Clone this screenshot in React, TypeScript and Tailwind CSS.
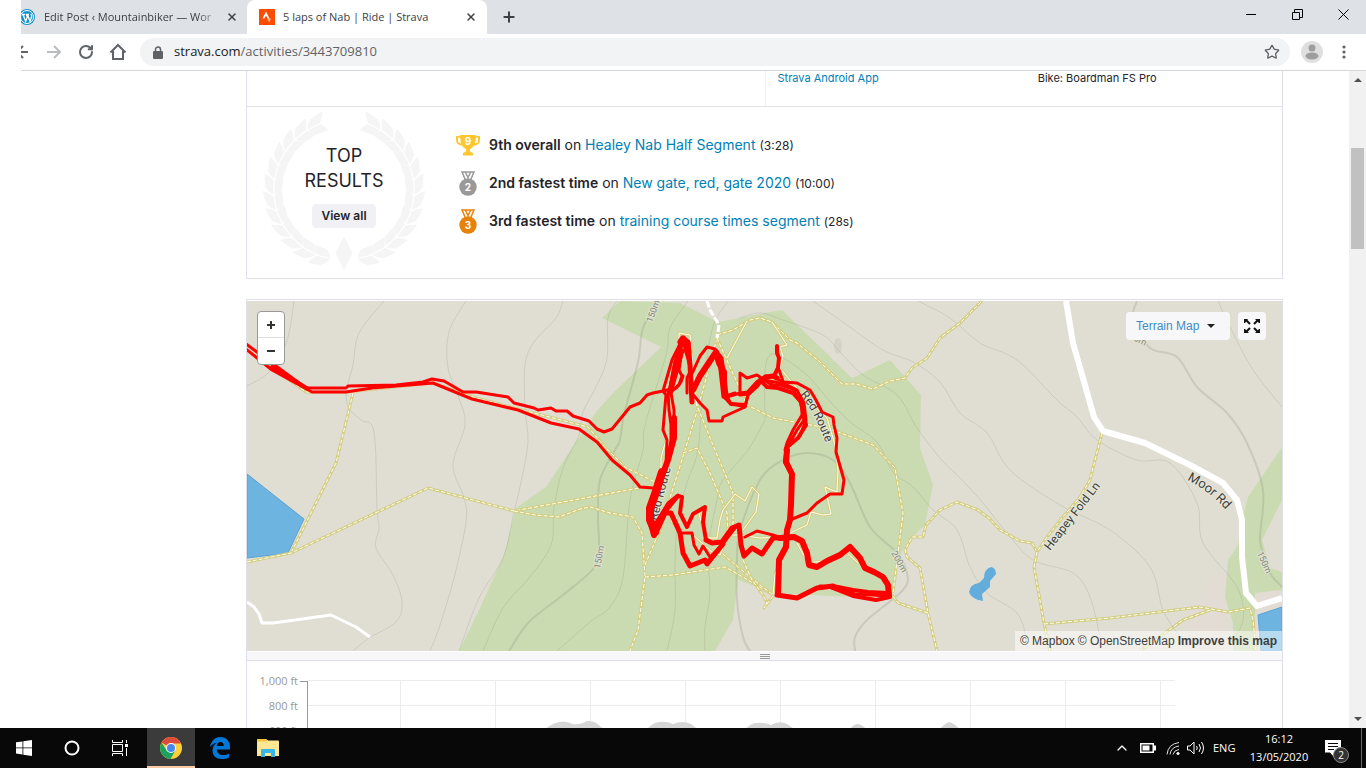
import { ReactNode } from "react";
import { ChevronUp, Plus, RotateCw, Star, X } from "lucide-react";

type Point = [number, number];

const parse = (points: string): Point[] =>
  points.split(" ").map((p) => p.split(",").map(Number) as Point);

// Catmull-Rom through the points, so contours come out as soft curves
const smooth = (points: string) => {
  const p = parse(points);
  let d = `M${p[0][0]} ${p[0][1]}`;
  for (let i = 0; i < p.length - 1; i++) {
    const a = p[i - 1] ?? p[i];
    const b = p[i];
    const c = p[i + 1];
    const e = p[i + 2] ?? c;
    d += `C${b[0] + (c[0] - a[0]) / 6} ${b[1] + (c[1] - a[1]) / 6} ${c[0] - (e[0] - b[0]) / 6} ${c[1] - (e[1] - b[1]) / 6} ${c[0]} ${c[1]}`;
  }
  return d;
};

const contours = [
  "294,301 290,328 284,348 268,373 247,386",
  "384,301 359,333 353,365 347,388 348,407 361,420 374,432 377,508 379,528 376,548 393,575 402,602 396,622 369,638 353,651",
  "466,301 449,332 448,368 459,398 465,425 453,465 464,498 466,522 454,578 439,628 430,651",
  "563,301 556,318 534,342 525,365 525,408 528,442 521,482 514,512 503,558 479,598 459,651",
  "617,301 608,318 607,358 597,385 583,412 579,435 563,468 554,508 551,545 529,578 503,608 483,651",
  "688,301 670,328 666,355 645,425 643,450 630,500 623,577 610,607 590,622 557,651",
  "728,301 712,330 702,400 698,450 687,483 678,517 675,560 675,610 667,651",
  "765,420 748,450 723,480 717,500 708,550 710,593 705,627 705,651",
  "740,318 760,313 783,320 823,335 840,352 863,375 897,395 917,428 940,458 960,478 983,503 1007,533 1033,560 1073,573 1090,597 1100,637",
  "813,301 847,325 883,350 913,362 940,382 960,413 987,433 1010,470 1060,505 1110,530 1150,567 1163,610 1180,637",
  "918,301 950,318 980,343 1017,360 1057,400 1077,417 1097,440 1137,460 1170,463 1197,503 1203,543 1237,587 1243,620 1230,645",
  "765,420 765,372 770,355 783,358 807,375 827,398 850,422 877,442 893,472 913,487 933,510 957,530 970,567 987,593 1017,613 1027,640",
  "1218,301 1233,333 1253,370 1282,407",
];

const indexContours = [
  "658,301 643,328 638,362 624,415 620,440 615,450 600,480 598,517 599,547 594,568 563,595 529,622 509,651",
  "750,651 743,637 737,600 737,560 740,530 760,480 783,460 807,453 833,460 850,483 870,527 897,553 907,573 903,590 867,620 855,637 855,651",
  "1137,301 1133,320 1150,348 1177,357 1197,387 1227,413 1247,443 1263,490 1260,537 1263,553 1270,573 1282,587",
];

const footpaths = [
  "247,350 306,392 346,392 433,383 476,398 588,427 605,447 625,467 657,483",
  "353,393 336,463 291,553",
  "247,562 291,553 428,488 514,511 590,497 650,486",
  "514,511 535,515 559,517 580,509 590,507 610,513 633,517 642,533 645,577 638,630 630,651",
  "645,577 673,575 725,567 743,577 773,595",
  "645,565 660,530 685,450 698,408 717,338",
  "698,408 715,450 733,493 733,530",
  "683,453 697,448 710,473 727,513 728,537",
  "717,338 747,405 773,418 827,428 873,445 895,468 903,513 893,593",
  "717,335 733,330 750,320 760,318 772,322 790,340 797,343 820,362 842,384 856,384 873,389 890,381 905,378 912,368 927,358 940,338 960,323 982,301",
  "1037,552 1032,543 1020,541 1000,530 990,519 978,510 957,502 940,510 926,525 923,537 912,537 905,550 907,557 920,568 928,613 937,651",
  "928,613 898,603 892,595",
  "1102,433 1095,460 1090,480 1080,497 1062,518 1047,537 1037,552 1034,567 1044,623 1050,651",
  "1044,624 1110,618 1200,607 1228,612 1250,608 1253,620 1256,651",
  "1210,610 1183,620 1140,651",
  "718,550 750,577 773,595",
  "743,560 752,580 763,595 767,603 764,608 773,596",
];

const trails = [
  "772,322 787,345 780,347 783,356 780,368 805,398 827,418 835,445 838,470 837,492 825,487 831,514 823,515 811,512 807,525 790,533",
  "679,367 679,333 690,335 697,406 694,395",
  "747,321 727,358",
  "661,475 661,458 666,440",
  "655,534 668,505 672,522 680,530 693,535 712,552 720,555 728,535 740,535 760,538 787,537",
  "698,510 706,538 717,538 720,520 723,510 735,494 745,501 752,487 759,494 756,512 743,530",
  "797,543 808,563 830,560 846,552 858,563",
  "773,594 775,575 780,560",
];

const forest =
  "602,318 620,301 680,303 718,322 770,312 782,310 852,378 890,360 921,395 920,448 933,485 925,525 907,542 898,560 892,594 850,597 773,593 738,580 733,620 715,651 459,651 479,610 504,555 516,508 546,487 596,412 612,394 661,347";

const rides: { width: number; points: string }[] = [
  { width: 3, points: "246,344 306,388 346,388 348,386 396,385 423,382 432,379 444,381 463,392 476,392 508,397 514,403 534,408 538,410 551,408 556,411 567,411 573,416 589,421 597,429 604,432 612,429 630,407 640,403 647,395 653,393 663,391 676,388 681,382 683,376" },
  { width: 3, points: "246,349 272,370 312,392 346,392 372,388 433,383 472,399 518,410 551,423 579,429 590,437 597,442 612,460 630,475 640,487 653,488" },
  { width: 4, points: "272,367 308,389" },
  { width: 3, points: "683,338 672,360 663,391 666,395 663,430 667,440 666,465 660,480 648,515 653,535" },
  { width: 3, points: "684,340 675,362 670,387 668,392 669,410 671,425 671,440 668,458 660,480 652,500 650,515 655,535" },
  { width: 3, points: "683,350 677,372 671,393 674,410 674,430" },
  { width: 5, points: "682,340 675,366 670,393" },
  { width: 6, points: "674,418 674,438 668,460 662,476 656,495 649,515 654,535" },
  { width: 8, points: "662,472 656,491 650,508 650,520 655,532" },
  { width: 3, points: "682,350 679,370 682,376 679,385 671,392" },
  { width: 7, points: "681,342 683,339 687,343 688,352" },
  { width: 5, points: "688,342 690,365 692,402" },
  { width: 3, points: "684,345 691,370 687,378 687,393" },
  { width: 6, points: "693,390 700,376 710,361 716,352" },
  { width: 3, points: "691,376 700,356 707,347 715,349 722,358 725,378 727,395 730,403 745,407 748,395 760,382" },
  { width: 6, points: "716,353 719,363 724,372 724,390 726,397" },
  { width: 4, points: "725,397 731,404 745,405" },
  { width: 3, points: "718,357 720,370 723,397 735,393" },
  { width: 3, points: "691,392 700,403 707,410 709,421 722,421 723,417 745,407 748,395 757,387 765,376 773,377" },
  { width: 3, points: "727,397 740,393 740,373 747,378 757,375 763,379 770,384 778,386" },
  { width: 5, points: "740,394 748,393 758,382 766,377 773,376 777,378" },
  { width: 4, points: "777,346 777,353 779,358 778,368 774,376" },
  { width: 3, points: "778,367 784,384" },
  { width: 3, points: "772,376 783,382 797,383 810,390 816,400 822,412 833,417 834,425 837,438 836,452 840,466 844,480 842,494 830,494 817,503 807,513 790,520" },
  { width: 4, points: "760,380 767,387 778,388 793,393 801,402 806,425 798,438 787,447 785,462 792,475" },
  { width: 3, points: "764,380 785,384 797,390 804,403 806,420 800,436 787,448" },
  { width: 3, points: "777,384 793,389 802,405 802,415 793,430 787,443 785,450" },
  { width: 3, points: "800,400 804,420 797,430 788,446" },
  { width: 6, points: "787,450 786,462 792,474 791,505 790,520 787,530 786,547 779,560 778,594" },
  { width: 5, points: "777,595 797,598 817,588 833,586" },
  { width: 4, points: "833,586 853,590 868,592 888,593" },
  { width: 4, points: "830,587 853,596 876,600 890,597" },
  { width: 3, points: "820,586 835,587 855,594 888,596" },
  { width: 6, points: "889,595 888,585 883,577 874,572 865,568 860,558 850,547 840,555 827,561 817,567 809,565 807,553 802,541 794,537 780,538" },
  { width: 5, points: "780,538 773,538 762,554 752,548 744,556 741,545 739,525 732,528 722,542 712,543 706,540" },
  { width: 3, points: "787,540 773,535 757,531 745,537" },
  { width: 4, points: "655,533 661,517 678,496 682,497 680,513 687,527 693,514 705,507 703,522 706,540" },
  { width: 3, points: "655,524 668,503 678,495" },
  { width: 5, points: "656,533 665,513 671,513 680,533 683,553 690,566 705,560 707,564 723,544" },
  { width: 3, points: "681,533 692,533 694,545 699,554 703,546 710,557 722,545 735,528" },
];

const Line = ({ d, stroke, width, dash }: { d: string; stroke: string; width: number; dash?: string }) => (
  <polyline points={d} fill="none" stroke={stroke} strokeWidth={width} strokeDasharray={dash} strokeLinejoin="round" />
);

function TerrainMap() {
  const label = { fill: "#3f3f3f", stroke: "#e6e8d8", strokeWidth: 2, paintOrder: "stroke" };
  return (
    <svg
      viewBox="247 301 1035 350"
      preserveAspectRatio="xMidYMid slice"
      className="block h-[350px] w-full bg-[#e0ded3] font-['Roboto',sans-serif]"
      role="img"
      aria-label="Ride map"
    >
      <path d="M1213 573h15l-3 78h-25v-20l-16-5 6-20 15-10zM1262 570l20-5v86h-30v-60z" fill="#e3dcd4" />
      <polygon points={forest} fill="#cbdbb1" />
      <polygon
        points="1282,447 1248,497 1243,517 1238,545 1228,560 1225,597 1233,623 1233,651 1255,651 1255,593 1282,590 1282,572 1270,568 1262,540 1282,500"
        fill="#cbdbb1"
      />
      <ellipse cx="838" cy="346" rx="4" ry="8" fill="#d0cfc5" opacity=".7" />
      <polygon points="247,474 304,519 288,553 247,558" fill="#6db4e0" stroke="#5ba3d4" />
      <polygon points="1258,615 1282,607 1282,651 1261,651" fill="#6db4e0" stroke="#5ba3d4" />
      <path
        d="M991 567q5 1 5 7l-6 7v6l-8 7 1 7q-12-2-14-9 1-8 10-9l5-5q0-9 7-11z"
        fill="#62addb"
      />

      {contours.map((c) => (
        <path key={c} d={smooth(c)} fill="none" stroke="#8f9280" strokeOpacity=".25" />
      ))}
      {indexContours.map((c) => (
        <path key={c} d={smooth(c)} fill="none" stroke="#8f9280" strokeOpacity=".28" strokeWidth="2" />
      ))}

      {footpaths.map((p) => (
        <g key={p}>
          <Line d={p} stroke="#d3ce84" width={3} />
          <Line d={p} stroke="#ffffee" width={1} dash="4 2" />
        </g>
      ))}
      {trails.map((p) => (
        <g key={p}>
          <Line d={p} stroke="#d3ce84" width={3} />
          <Line d={p} stroke="#fffff2" width={1} />
        </g>
      ))}
      <Line d="247,602 254,607 259,614 262,623 273,623 331,615 356,627 370,637" stroke="#fff" width={3} />
      <Line d="707,301 710,310 719,325 717,338" stroke="#fff" width={3} dash="7 2" />
      <Line
        d="1066,301 1073,343 1094,417 1103,431 1145,443 1190,465 1223,483 1237,500 1242,520 1242,557 1246,593 1257,606 1282,598"
        stroke="#fff"
        width={6}
      />

      <defs>
        <path id="moor" d="M1187 480Q1212 492 1232 517" />
        <path id="heapey" d="M1050 551L1102 484" />
        <path id="redEast" d="M800 395Q814 410 826 444" />
        <path id="redWest" d="M657 521L672 464" />
      </defs>
      <text fontSize="13" {...label}><textPath href="#moor">Moor Rd</textPath></text>
      <text fontSize="12" {...label}><textPath href="#heapey">Heapey Fold Ln</textPath></text>
      <text fontSize="12" {...label}><textPath href="#redEast">Red Route</textPath></text>
      <text fontSize="12" {...label}><textPath href="#redWest">Red Route</textPath></text>
      <g fontSize="9" fill="#85877b" stroke="#dfe2d0" strokeWidth="2" paintOrder="stroke">
        <text transform="translate(652 323) rotate(-70)">150m</text>
        <text transform="translate(600 569) rotate(-80)">150m</text>
        <text transform="translate(891 553) rotate(60)">200m</text>
        <text transform="translate(1257 553) rotate(66)">150m</text>
        <text transform="translate(1124 336) rotate(25)">150m</text>
      </g>

      <g fill="none" stroke="#f00" strokeLinejoin="round" strokeLinecap="round">
        {rides.map((r) => (
          <polyline key={r.points} points={r.points} strokeWidth={r.width} />
        ))}
      </g>
    </svg>
  );
}

function Laurel() {
  const angles = Array.from({ length: 12 }, (_, i) => 163 - i * 12.5);
  return (
    <svg viewBox="-82 -82 164 164" className="absolute inset-0 h-full w-full" fill="#f5f5f6" aria-hidden="true">
      {[1, -1].map((side) => (
        <g key={side} transform={`scale(${side} 1)`}>
          {angles.map((a) => (
            <g key={a} transform={`rotate(${a}) translate(0 -70)`}>
              <path d="M7 -.6H-7Q-11-5-14-10Q-7-10 0-8.500Q5-5 7-.6z" />
              <path d="M7 .6H-7Q-10 5-12 9Q-6 9 1 8Q5 5 7 .6z" />
            </g>
          ))}
        </g>
      ))}
      <path d="M0 46L9 63 0 81-9 63z" stroke="#fff" />
    </svg>
  );
}

function Medal({ place, color }: { place: string; color: string }) {
  return (
    <svg viewBox="0 0 24 26" className="h-[26px] w-6 shrink-0" aria-hidden="true">
      <path d="M6 2h12l-3.500 8h-5zM9.500 2.500l3 6M14.500 2.500l-3 6" fill="none" stroke={color} strokeWidth="1.500" />
      <circle cx="12" cy="17" r="8.700" fill={color} />
      <text x="12" y="21" textAnchor="middle" fontSize="10" fontWeight="700" fill="#fff">{place}</text>
    </svg>
  );
}

function Trophy() {
  return (
    <svg viewBox="0 0 24 26" className="h-[26px] w-6 shrink-0" aria-hidden="true">
      <path
        d="M4 3h16v1h4v4q0 5-6 5.500-1 2-4 3.500v2.500l3 1.500v2.500H7V21l3-1.500V17q-3-1.500-4-3.500Q0 13 0 8V4h4zM2 5.500V8q0 3 3 3.500L4 5.500zM22 5.500h-2l-1 6q3-.5 3-3.500z"
        fill="#fec62f"
        fillRule="evenodd"
      />
      <text x="12" y="13" textAnchor="middle" fontSize="10" fontWeight="700" fill="#fff">9</text>
    </svg>
  );
}

interface ResultProps {
  icon: ReactNode;
  award: string;
  segment: string;
  time: string;
}

function Result({ icon, award, segment, time }: ResultProps) {
  return (
    <li className="flex h-[38px] items-center gap-[9px]">
      {icon}
      <p className="text-sm text-[#242428]">
        <strong className="font-semibold">{award}</strong> on{" "}
        <a href="#segment" className="text-[#007fb6]">{segment}</a>{" "}
        <span className="text-xs">({time})</span>
      </p>
    </li>
  );
}

function ElevationChart() {
  return (
    <svg viewBox="1 1 1035 140" preserveAspectRatio="xMinYMin slice" className="block h-[140px] w-full font-['Open_Sans',sans-serif]" role="img" aria-label="Elevation">
      <g stroke="#ececec" shapeRendering="crispEdges">
        {[20, 45, 70, 95].map((y) => (
          <line key={y} x1="61" x2="929" y1={y} y2={y} />
        ))}
        {[154, 249, 344, 439, 534, 629, 724, 819, 914].map((x) => (
          <line key={x} x1={x} x2={x} y1="20" y2="140" />
        ))}
      </g>
      <path
        d="M290 75Q300 68 307 64q10-5 20 0 6 1 14-3 8-1 14 6l14 8zM395 75q8-9 14-12 10-3 18 1 10-4 18 0l14 11zM495 75q6-10 14-12 9-1 16 2 8-5 16-1l16 11zM600 75q5-10 11-11 7 0 13 11zM688 75q10-11 15-13 7 2 16 13z"
        fill="#d5d5d5"
      />
      <path d="M54 21h7v119" fill="none" stroke="#999" shapeRendering="crispEdges" />
      <g fontSize="11" fill="#999" textAnchor="end">
        <text x="52" y="25">1,000 ft</text>
        <text x="52" y="50">800 ft</text>
        <text x="52" y="75">600 ft</text>
      </g>
    </svg>
  );
}

function BrowserBar() {
  return (
    <header className="ml-[21px] shrink-0 overflow-hidden border-b border-[#d5d6d9] font-['Open_Sans','Noto_Sans',sans-serif]">
      <div className="flex h-[34px] items-center bg-[#dee1e6] text-[#3c4043]">
        <div className="-ml-[2px] flex w-[228px] shrink-0 items-center">
          <svg viewBox="0 0 16 16" className="size-4 shrink-0" aria-hidden="true">
            <circle cx="8" cy="8" r="8" fill="#1192cf" />
            <circle cx="8" cy="8" r="6.500" fill="none" stroke="#fff" />
            <path d="M3 5.500h3M4 5.500l2.700 7L8.300 8 7.400 5.500H10M8.500 5.500l2.500 7 1.500-4.500q.5-2-.8-3" fill="none" stroke="#fff" strokeWidth="1.300" />
          </svg>
          <span className="ml-[9px] w-[175px] text-[11px] whitespace-nowrap [mask-image:linear-gradient(to_right,black_88%,transparent)]">
            Edit Post ‹ Mountainbiker — Wor
          </span>
          <button aria-label="Close Edit Post" className="ml-[3px] p-1"><X size={12} strokeWidth={3} /></button>
        </div>
        <div className="flex h-full w-60 shrink-0 items-center rounded-t-lg bg-white pl-3">
          <svg viewBox="0 0 16 16" className="size-4 shrink-0" aria-hidden="true">
            <path fill="#fc4c02" d="M0 0h16v16H0z" />
            <path d="M3.500 9.500L7 2.500l3.500 7H8.600L7 6.600 5.400 9.500z" fill="#fff" />
            <path d="M8.200 9.500H12L10.200 13.500z" fill="#fdb492" />
          </svg>
          <span className="ml-2 flex-1 text-[11px] whitespace-nowrap">5 laps of Nab | Ride | Strava</span>
          <button aria-label="Close Strava" className="mr-1.5 p-1"><X size={12} strokeWidth={3} /></button>
        </div>
        <button aria-label="New tab" className="ml-[14px]"><Plus size={16} strokeWidth={3} /></button>
        <div className="ml-auto flex h-[29px] items-center self-start text-black">
          <button aria-label="Minimise" className="flex w-[46px] justify-center"><span className="h-px w-2.5 bg-black" /></button>
          <button aria-label="Restore" className="flex w-[46px] justify-center">
            <svg viewBox="0 0 11 11" className="size-[11px]" fill="none" stroke="#000"><path d="M.5 3.500h7v7h-7zM2.500 3V.5h8v8H8" /></svg>
          </button>
          <button aria-label="Close window" className="flex w-[46px] justify-center">
            <svg viewBox="0 0 11 11" className="size-[11px]" fill="none" stroke="#000"><path d="M.5.5l10 10M10.500.5l-10 10" /></svg>
          </button>
        </div>
      </div>
      <div className="flex h-9 items-center text-[#5f6368]">
        <button aria-label="Back" className="-ml-[7px] size-4">
          <svg viewBox="0 0 16 16" fill="none" stroke="currentColor" strokeWidth="2"><path d="M14 8H3M9 2L3 8l6 6" /></svg>
        </button>
        <button aria-label="Forward" className="ml-4 size-4 text-[#babcbe]">
          <svg viewBox="0 0 16 16" fill="none" stroke="currentColor" strokeWidth="2"><path d="M1 8h12M8 2l6 6-6 6" /></svg>
        </button>
        <button aria-label="Reload" className="ml-4"><RotateCw size={16} strokeWidth={3} /></button>
        <button aria-label="Home" className="ml-[15px] size-[18px]">
          <svg viewBox="0 0 18 18" fill="none" stroke="currentColor" strokeWidth="2"><path d="M1.500 9.500L9 2l7.500 7.500M4 8v8h10V8" /></svg>
        </button>
        <div className="ml-[13px] flex h-7 flex-1 items-center rounded-full bg-[#f1f3f4] pr-2.5 pl-[13px]">
          <svg viewBox="0 0 10 13" className="h-[13px] w-2.5" aria-hidden="true">
            <path d="M2.500 5.500V3.500a2.500 2.500 0 015 0v2" fill="none" stroke="#5f6368" strokeWidth="1.500" />
            <rect y="5" width="10" height="8" rx="1" fill="#5f6368" />
          </svg>
          <span className="ml-[11px] flex-1 text-[13px]"><span className="text-[#202124]">strava.com</span>/activities/3443709810</span>
          <button aria-label="Bookmark"><Star size={16} strokeWidth={2} /></button>
        </div>
        <button aria-label="Profile" className="ml-[11px] size-[22px]">
          <svg viewBox="0 0 22 22"><circle cx="11" cy="11" r="11" fill="#dfdfdf" /><circle cx="11" cy="7" r="3.500" fill="#9e9e9e" /><ellipse cx="11" cy="15" rx="6.500" ry="3.500" fill="#9e9e9e" /></svg>
        </button>
        <button aria-label="Menu" className="mr-[15px] ml-[14px] h-4 w-[14px]">
          <svg viewBox="0 0 14 16" fill="#5f6368"><circle cx="7" cy="3" r="1.600" /><circle cx="7" cy="8" r="1.600" /><circle cx="7" cy="13" r="1.600" /></svg>
        </button>
      </div>
    </header>
  );
}

function Taskbar() {
  return (
    <footer className="flex h-10 shrink-0 items-center bg-[#080808] font-['Open_Sans',sans-serif] text-white">
      <button aria-label="Start" className="flex w-12 justify-center">
        <svg viewBox="0 0 16 16" className="size-4" fill="#fff"><path d="M0 2.300l6.500-.9v6.100H0zM7.300 1.300L16 0v7.500H7.300zM0 8.300h6.500v6.200L0 13.600zM7.300 8.300H16V16l-8.700-1.300z" /></svg>
      </button>
      <button aria-label="Cortana" className="flex w-12 justify-center">
        <svg viewBox="0 0 16 16" className="size-4"><circle cx="8" cy="8" r="6.500" fill="none" stroke="#fff" strokeWidth="2" /></svg>
      </button>
      <button aria-label="Task view" className="mr-[3px] flex w-12 justify-center">
        <svg viewBox="0 0 16 16" className="size-4" fill="none" stroke="#fff"><path d="M.5 0v2.500h10V0M.5 4.500h10v7H.5zM.5 16v-2.500h10V16M14.500 0v3M14.500 8v8" /><path d="M13 4h3v3h-3z" fill="#fff" stroke="none" /></svg>
      </button>
      <button aria-label="Chrome" className="flex h-full w-12 items-center justify-center border-b-2 border-[#fbcaa4] bg-[#3b3b3b] pt-0.5">
        <svg viewBox="0 0 22 22" className="size-[22px]">
          <circle cx="11" cy="11" r="11" fill="#fdd03b" />
          <path d="M11 11L1.500 5.500A11 11 0 0120.500 5.500L20.800 6.500H11z" fill="#dd4b3e" />
          <path d="M1.500 5.500A11 11 0 0010.500 22l4.800-8.500L11 11 6.700 13.500z" fill="#1aa260" />
          <circle cx="11" cy="11" r="5" fill="#fff" />
          <circle cx="11" cy="11" r="4" fill="#4687f4" />
        </svg>
      </button>
      <button aria-label="Edge" className="flex w-[49px] justify-center">
        <svg viewBox="0 0 20 22" className="h-[22px] w-5">
          <path d="M0 10C1 4 5 0 10.500 0 16.500 0 20 4.500 20 10v2.500H6.800C7 16 9.500 18 13 18c2.300 0 4.300-.6 6-1.600V20.500C17 21.500 14.700 22 12 22 6 22 2.500 18.500 2.500 13.500c0-3.200 1.500-6 4.300-7.700C3.900 6.300 1.500 7.800 0 10zM6.900 9h6.900C13.800 6.500 12.500 5 10.500 5S7.200 6.500 6.900 9z" fill="#0078d7" />
        </svg>
      </button>
      <button aria-label="File Explorer" className="flex w-12 justify-center">
        <svg viewBox="0 0 22 18" className="h-[18px] w-[22px]">
          <path d="M0 1q0-1 1-1h8l2 1.500h10q1 0 1 1V17H0z" fill="#ffe694" />
          <path d="M0 1q0-1 1-1h8l1 2.500H0z" fill="#f8c53a" />
          <path d="M4 18v-7q0-1 1-1h12q1 0 1 1v7h-4v-4H8v4z" fill="#37b6ea" />
        </svg>
      </button>
      <div className="ml-auto flex h-full items-center text-[11px] leading-[18px]">
        <button aria-label="Hidden icons" className="mr-[10px]"><ChevronUp size={16} /></button>
        <svg viewBox="0 0 16 10" className="h-2.5 w-4" fill="#fff" aria-hidden="true"><path d="M0 0h14v2.500h2v5h-2V10H0zM1.500 1.500v7h11v-7z" fillRule="evenodd" /><path d="M2.500 2.500h7v5h-7z" /></svg>
        <svg viewBox="0 0 14 14" className="ml-2.5 size-[14px]" fill="none" stroke="#ddd" aria-hidden="true"><path d="M1 13.500Q2 3 13 1.500M4 13.500Q5 6 13 5M7 13.500Q8 9 13 8.500" /><circle cx="12" cy="12.500" r="1.200" fill="#fff" /></svg>
        <svg viewBox="0 0 17 14" className="ml-[7px] h-[14px] w-[17px]" fill="none" stroke="#fff" aria-hidden="true"><path d="M.5 5h2.500l4-4v12l-4-4H.5zM9.500 5q1.500 2 0 4M12 3q3 4 0 8M14.500 1q4 6 0 12" /></svg>
        <span className="ml-[9px] w-6">ENG</span>
        <div className="ml-3 w-[60px] text-center">
          <div>16:12</div>
          <div>13/05/2020</div>
        </div>
        <button aria-label="2 notifications" className="relative ml-4 h-[22px] w-6">
          <svg viewBox="0 0 16 17" className="h-[17px] w-4"><path d="M0 0h16v12.500H9V17l-4-4.500H0z" fill="#fff" /><path d="M3 3.500h10M3 6.500h10M3 9.500h6" stroke="#080808" /></svg>
          <span className="absolute right-0 -bottom-1 size-4 rounded-full border border-[#888] bg-[#333] text-[10px] leading-[14px]">2</span>
        </button>
        <span className="ml-3 mr-1 h-full w-px bg-[#666]" />
      </div>
    </footer>
  );
}

export default function App() {
  return (
    <div className="flex h-screen flex-col overflow-hidden bg-white">
      <BrowserBar />
      <div className="flex min-h-0 flex-1 overflow-hidden">
        <main className="min-w-0 flex-1 pr-[66px] pl-[246px] font-['Inter',sans-serif]">
          <section className="border-x border-b border-[#dfdfe8]">
            <div className="grid h-9 grid-cols-2 border-b border-[#e3e3e6]">
              <div />
              <div className="grid grid-cols-2 border-l border-[#f0f0f0] text-[11px] leading-[14px]">
                <a href="#app" className="pl-3 text-[#007fb6]">Strava Android App</a>
                <span className="pl-[14px] text-[#242428]">Bike: Boardman FS Pro</span>
              </div>
            </div>
            <div className="flex h-[171px]">
              <div className="relative mt-[1px] ml-[15px] flex h-[164px] w-[164px] shrink-0 flex-col items-center pt-[35px]">
                <Laurel />
                <h2 className="relative text-center text-lg leading-[25px] font-normal text-[#242428]">TOP<br />RESULTS</h2>
                <button className="relative mt-[11px] h-6 rounded-sm bg-[#f0f0f5] px-[9px] text-xs font-semibold text-[#242428]">View all</button>
              </div>
              <ul className="ml-[30px] pt-[19px]">
                <Result icon={<Trophy />} award="9th overall" segment="Healey Nab Half Segment" time="3:28" />
                <Result icon={<Medal place="2" color="#999" />} award="2nd fastest time" segment="New gate, red, gate 2020" time="10:00" />
                <Result icon={<Medal place="3" color="#e6820b" />} award="3rd fastest time" segment="training course times segment" time="28s" />
              </ul>
            </div>
          </section>

          <section className="mt-5 border border-[#dfdfe8]">
            <div className="relative border-y border-white">
              <TerrainMap />
              <div className="absolute top-[10px] left-[10px] flex w-7 flex-col rounded-sm border border-[#999] bg-white text-[#333]">
                <button aria-label="Zoom in" className="flex h-[26px] items-center justify-center border-b border-[#ddd]">
                  <svg viewBox="0 0 8 8" className="size-2" stroke="#333" strokeWidth="2"><path d="M0 4h8M4 0v8" /></svg>
                </button>
                <button aria-label="Zoom out" className="flex h-[26px] items-center justify-center">
                  <svg viewBox="0 0 8 8" className="size-2" stroke="#333" strokeWidth="2"><path d="M0 4h8" /></svg>
                </button>
              </div>
              <div className="absolute top-[11px] right-4 flex gap-2 font-['Liberation_Sans',sans-serif]">
                <button className="flex h-7 w-[104px] items-center gap-2 rounded-sm bg-[#f7f7fa] pl-2.5 text-xs text-[#3d8dc4]">
                  Terrain Map
                  <svg viewBox="0 0 8 4" className="h-1 w-2" fill="#222"><path d="M0 0h8L4 4z" /></svg>
                </button>
                <button aria-label="Full screen" className="flex size-7 items-center justify-center rounded-sm bg-[#f7f7fa]">
                  <svg viewBox="0 0 16 16" className="size-4" fill="#111" stroke="#111" strokeWidth="2">
                    <path d="M2 2l4 4M14 2l-4 4M2 14l4-4M14 14l-4-4" />
                    <path d="M0 1h4L1 5H0zM16 1v4h-1l-4-4zM0 15v-4h1l4 4zM16 15h-5l4-4h1z" stroke="none" />
                  </svg>
                </button>
              </div>
              <div className="absolute right-0 bottom-0 flex h-5 items-center gap-[3px] bg-white/50 px-[5px] font-['Liberation_Sans',sans-serif] text-xs text-[#404040]">
                <a href="#mapbox">© Mapbox</a>
                <a href="#osm">© OpenStreetMap</a>
                <a href="#improve" className="font-bold">Improve this map</a>
              </div>
            </div>
            <div className="flex h-[9px] flex-col items-center justify-center gap-px border-b border-[#dfdfe8] bg-[#f7f7fa]">
              <span className="h-px w-2.5 bg-[#999]" />
              <span className="h-px w-2.5 bg-[#999]" />
              <span className="h-px w-2.5 bg-[#999]" />
            </div>
            <ElevationChart />
          </section>
        </main>
        <div className="flex w-[17px] shrink-0 flex-col items-center justify-between bg-[#f1f1f1] py-[7px]">
          <svg viewBox="0 0 8 4" className="h-1 w-2" fill="#505050"><path d="M4 0l4 4H0z" /></svg>
          <div className="mt-[66px] mb-auto h-[101px] w-[13px] bg-[#c1c1c1]" />
          <svg viewBox="0 0 8 4" className="h-1 w-2" fill="#505050"><path d="M0 0h8L4 4z" /></svg>
        </div>
      </div>
      <Taskbar />
    </div>
  );
}
